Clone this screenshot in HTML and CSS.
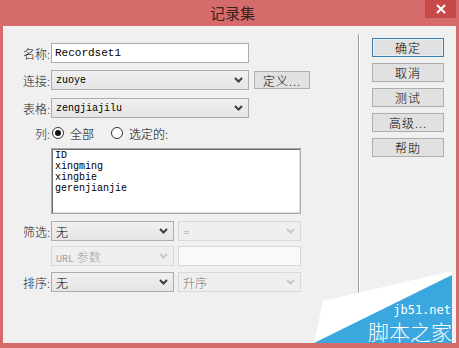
FILE: index.html
```html
<!DOCTYPE html>
<html lang="zh-CN">
  <head>
    <meta charset="UTF-8" />
    <meta name="viewport" content="width=device-width, initial-scale=1.0" />
    <title>记录集</title>
    <link rel="stylesheet" href="styles.css">
  </head>
  <body>
    <div class="window">
      <div class="titlebar">
        <span class="title">记录集</span>
        <span class="close">
          <svg width="12" height="12" viewBox="0 0 12 12"><path d="M2 2 L10 10 M10 2 L2 10" stroke="#fff" stroke-width="2"/></svg>
        </span>
      </div>
      <div class="client">
        <div class="form">
          <div class="row r1">
            <span class="label">名称:</span>
            <div class="textbox wide">Recordset1</div>
          </div>
          <div class="row r2">
            <span class="label">连接:</span>
            <div class="combo wide">
              <span class="value mono">zuoye</span>
              <svg class="chev" width="9" height="6" viewBox="0 0 9 6"><path d="M1 1 L4.5 4.5 L8 1" fill="none" stroke="#3c3c3c" stroke-width="2"/></svg>
            </div>
            <div class="btn define">定义...</div>
          </div>
          <div class="row r3">
            <span class="label">表格:</span>
            <div class="combo wide">
              <span class="value mono">zengjiajilu</span>
              <svg class="chev" width="9" height="6" viewBox="0 0 9 6"><path d="M1 1 L4.5 4.5 L8 1" fill="none" stroke="#3c3c3c" stroke-width="2"/></svg>
            </div>
          </div>
          <div class="row r4">
            <span class="label">列:</span>
            <span class="radio checked"></span>
            <span class="radio-text">全部</span>
            <span class="radio second"></span>
            <span class="radio-text">选定的:</span>
          </div>
          <div class="listbox">
            <div>ID</div>
            <div>xingming</div>
            <div>xingbie</div>
            <div>gerenjianjie</div>
          </div>
          <div class="row r6">
            <span class="label">筛选:</span>
            <div class="combo half">
              <span class="value">无</span>
              <svg class="chev" width="9" height="6" viewBox="0 0 9 6"><path d="M1 1 L4.5 4.5 L8 1" fill="none" stroke="#3c3c3c" stroke-width="2"/></svg>
            </div>
            <div class="combo half disabled">
              <span class="value">=</span>
              <svg class="chev" width="9" height="6" viewBox="0 0 9 6"><path d="M1 1 L4.5 4.5 L8 1" fill="none" stroke="#c8c8c8" stroke-width="2"/></svg>
            </div>
          </div>
          <div class="row r7">
            <span class="label"></span>
            <div class="combo half disabled">
              <span class="value"><span class="mono">URL</span> 参数</span>
              <svg class="chev" width="9" height="6" viewBox="0 0 9 6"><path d="M1 1 L4.5 4.5 L8 1" fill="none" stroke="#c8c8c8" stroke-width="2"/></svg>
            </div>
            <div class="textbox half disabled"></div>
          </div>
          <div class="row r8">
            <span class="label">排序:</span>
            <div class="combo half">
              <span class="value">无</span>
              <svg class="chev" width="9" height="6" viewBox="0 0 9 6"><path d="M1 1 L4.5 4.5 L8 1" fill="none" stroke="#3c3c3c" stroke-width="2"/></svg>
            </div>
            <div class="combo half disabled">
              <span class="value sort">升序</span>
              <svg class="chev" width="9" height="6" viewBox="0 0 9 6"><path d="M1 1 L4.5 4.5 L8 1" fill="none" stroke="#c8c8c8" stroke-width="2"/></svg>
            </div>
          </div>
        </div>
        <div class="separator"></div>
        <div class="actions">
          <div class="btn default">确定</div>
          <div class="btn">取消</div>
          <div class="btn">测试</div>
          <div class="btn">高级...</div>
          <div class="btn">帮助</div>
        </div>
      </div>
      <svg class="watermark" width="142" height="77" viewBox="0 0 142 77">
        <polygon points="0,72 9,30 138,0 138,4" fill="#fff"/>
        <polygon points="0,72 138,4 138,72" fill="#3ba7df"/>
        <text x="137" y="43" text-anchor="end" class="wm-url">jb51.net</text>
        <text x="138" y="69" text-anchor="end" class="wm-name">脚本之家</text>
      </svg>
    </div>
  </body>
</html>
```

FILE: styles.css
```css
body {
  margin: 0;
  padding: 0;
  font-family: "Noto Sans CJK SC", "Liberation Sans", sans-serif;
  font-size: 12px;
  font-weight: 300;
  color: #000;
}

.window {
  position: relative;
  width: 459px;
  height: 348px;
  background-color: #d56b6b;
  padding: 0 3px 5px 3px;
  box-sizing: border-box;
  display: flex;
  flex-direction: column;
}

.titlebar {
  height: 26px;
  display: flex;
  justify-content: center;
  align-items: center;
  flex-shrink: 0;
}

.title {
  font-size: 15px;
  font-weight: 400;
  color: #3b2020;
  margin-left: 6px;
  margin-top: -2px;
}

.close {
  position: absolute;
  top: 0;
  right: 3px;
  width: 31px;
  height: 18px;
  background-color: #c74a4a;
  display: flex;
  justify-content: center;
  align-items: center;
}

.client {
  flex: 1;
  background-color: #f0f0f0;
  display: flex;
}

.form {
  width: 355px;
  padding-top: 17px;
  box-sizing: border-box;
}

.row {
  display: flex;
  align-items: center;
  height: 20px;
}

.r2 { margin-top: 7px; }
.r3 { margin-top: 8px; }
.r4 { margin-top: 7px; height: 16px; }
.r6 { margin-top: 7px; }
.r7 { margin-top: 5px; }
.r8 { margin-top: 6px; }

.label {
  width: 48px;
  flex-shrink: 0;
  text-align: right;
  padding-right: 1px;
  box-sizing: border-box;
  color: #1a1a1a;
}

.mono {
  font-family: "Liberation Mono", "DejaVu Sans Mono", monospace;
  font-weight: 400;
}

.textbox {
  height: 20px;
  box-sizing: border-box;
  border: 1px solid #acacac;
  background-color: #fff;
  font-family: "Liberation Mono", "DejaVu Sans Mono", monospace;
  font-weight: 400;
  font-size: 11px;
  line-height: 18px;
  padding-left: 3px;
}

.combo {
  height: 20px;
  box-sizing: border-box;
  border: 1px solid #acacac;
  background: linear-gradient(#f0f0f0, #e5e5e5);
  display: flex;
  align-items: center;
  justify-content: space-between;
  padding: 0 5px 0 4px;
}

.combo .value {
  font-size: 12px;
}

.combo .value.mono {
  font-size: 10px;
}

.combo .value .mono {
  font-size: 10px;
}

.wide {
  width: 198px;
}

.half {
  width: 123px;
}

.half + .half {
  margin-left: 4px;
  width: 123px;
}

.disabled {
  border-color: #d9d9d9;
  background: #efefef;
  color: #a2a2a2;
}

.textbox.disabled {
  background-color: #f9f9f9;
  border-color: #d6d6d6;
}

.sort {
  color: #7a7a7a;
}

.btn {
  height: 19px;
  box-sizing: border-box;
  border: 1px solid #adadad;
  background-color: #e1e1e1;
  display: flex;
  justify-content: center;
  align-items: center;
  font-size: 12px;
  letter-spacing: 1px;
}

.define {
  width: 56px;
  height: 18px;
  margin-left: 5px;
}

.radio {
  width: 12px;
  height: 12px;
  box-sizing: border-box;
  border: 1px solid #333;
  border-radius: 50%;
  background-color: #fff;
  margin-left: 1px;
  position: relative;
}

.radio.checked::after {
  content: "";
  position: absolute;
  left: 2px;
  top: 2px;
  width: 6px;
  height: 6px;
  border-radius: 50%;
  background-color: #111;
}

.radio.second {
  margin-left: 17px;
}

.radio-text {
  margin-left: 6px;
}

.listbox {
  margin: 7px 0 0 48px;
  width: 250px;
  height: 66px;
  box-sizing: border-box;
  border: 1px solid #a8a8a8;
  box-shadow: inset 1px 1px 0 #6d6d6d, inset -1px -1px 0 #e2e2e2;
  background-color: #fff;
  padding: 1px 0 0 3px;
  font-family: "Liberation Mono", "DejaVu Sans Mono", monospace;
  font-weight: 400;
  font-size: 10px;
  line-height: 11px;
}

.separator {
  width: 1px;
  background-color: #a0a0a0;
  margin: 8px 0 47px 0;
  box-shadow: 1px 0 0 #fff;
}

.actions {
  padding: 12px 0 0 13px;
  display: flex;
  flex-direction: column;
  gap: 6px;
}

.actions .btn {
  width: 72px;
}

.btn.default {
  border-color: #3c7fb1;
  box-shadow: inset 0 0 0 1px #e5f1fb;
}

.watermark {
  position: absolute;
  right: 3px;
  bottom: 0;
}

.wm-url {
  font-family: "DejaVu Sans Mono", monospace;
  font-size: 12px;
  fill: #fff;
}

.wm-name {
  font-family: "Noto Sans CJK SC", sans-serif;
  font-size: 21px;
  font-weight: 300;
  fill: #fff;
}
```
